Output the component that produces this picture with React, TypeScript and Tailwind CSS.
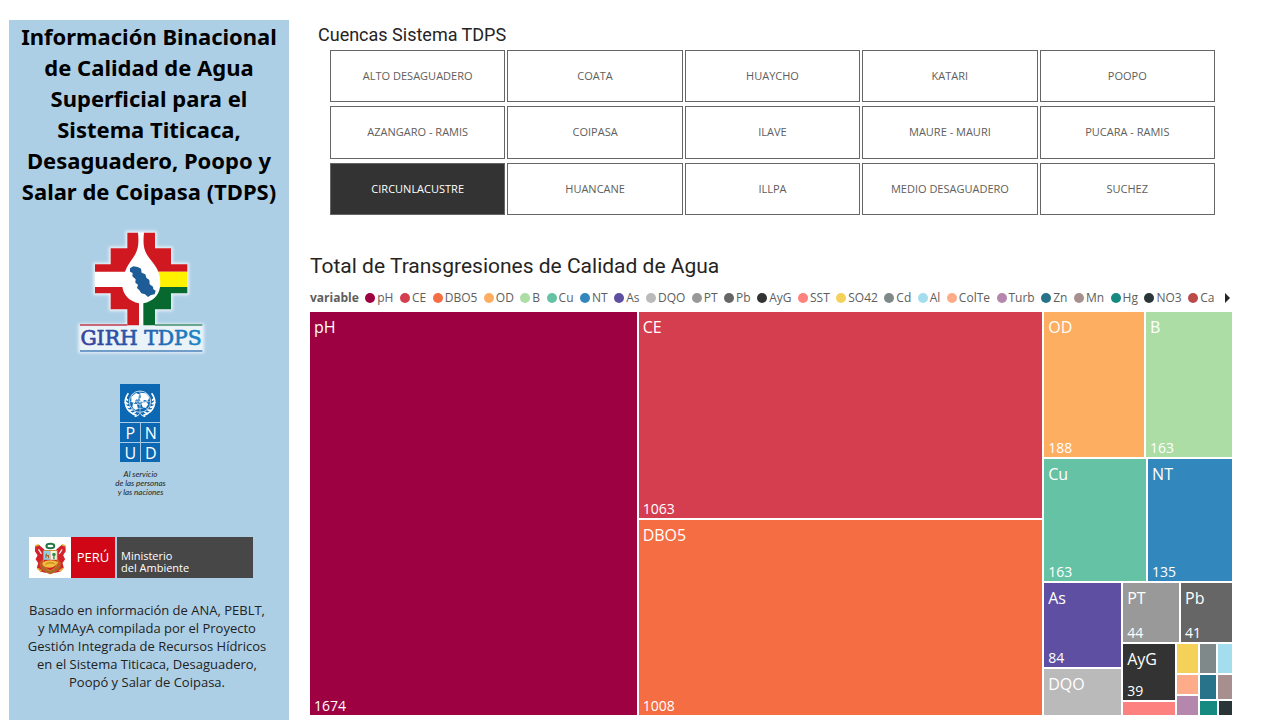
import { useState } from "react";

type Leaf = { name: string; color: string; weight: number; value?: number };
type Branch = { dir: "row" | "col"; weight: number; items: Tile[] };
type Tile = Leaf | Branch;

const basins = [
  "ALTO DESAGUADERO", "COATA", "HUAYCHO", "KATARI", "POOPO",
  "AZANGARO - RAMIS", "COIPASA", "ILAVE", "MAURE - MAURI", "PUCARA - RAMIS",
  "CIRCUNLACUSTRE", "HUANCANE", "ILLPA", "MEDIO DESAGUADERO", "SUCHEZ",
];

const legend: [string, string][] = [
  ["pH", "#9e0142"], ["CE", "#d53e4f"], ["DBO5", "#f46d43"], ["OD", "#fdae61"],
  ["B", "#abdda4"], ["Cu", "#66c2a5"], ["NT", "#3288bd"], ["As", "#5e4fa2"],
  ["DQO", "#bababa"], ["PT", "#999999"], ["Pb", "#666666"], ["AyG", "#333333"],
  ["SST", "#fd817e"], ["SO42", "#f4d25a"], ["Cd", "#7f8989"], ["Al", "#a4ddee"],
  ["ColTe", "#fdab89"], ["Turb", "#b687ac"], ["Zn", "#28738a"], ["Mn", "#a78f8f"],
  ["Hg", "#168980"], ["NO3", "#293537"], ["Ca", "#bb4a4a"],
];

const treemap: Branch = {
  dir: "row",
  weight: 1,
  items: [
    { name: "pH", color: "#9e0142", weight: 327, value: 1674 },
    {
      dir: "col",
      weight: 404,
      items: [
        { name: "CE", color: "#d53e4f", weight: 206, value: 1063 },
        { name: "DBO5", color: "#f46d43", weight: 195, value: 1008 },
      ],
    },
    {
      dir: "col",
      weight: 188,
      items: [
        {
          dir: "row",
          weight: 145,
          items: [
            { name: "OD", color: "#fdae61", weight: 100, value: 188 },
            { name: "B", color: "#abdda4", weight: 86, value: 163 },
          ],
        },
        {
          dir: "row",
          weight: 123,
          items: [
            { name: "Cu", color: "#66c2a5", weight: 102, value: 163 },
            { name: "NT", color: "#3288bd", weight: 84, value: 135 },
          ],
        },
        {
          dir: "row",
          weight: 132,
          items: [
            {
              dir: "col",
              weight: 77,
              items: [
                { name: "As", color: "#5e4fa2", weight: 83, value: 84 },
                { name: "DQO", color: "#bababa", weight: 46 },
              ],
            },
            {
              dir: "col",
              weight: 109,
              items: [
                {
                  dir: "row",
                  weight: 59,
                  items: [
                    { name: "PT", color: "#999999", weight: 56, value: 44 },
                    { name: "Pb", color: "#666666", weight: 51, value: 41 },
                  ],
                },
                {
                  dir: "row",
                  weight: 71,
                  items: [
                    {
                      dir: "col",
                      weight: 52,
                      items: [
                        { name: "AyG", color: "#333333", weight: 56, value: 39 },
                        { name: "", color: "#fd817e", weight: 13 },
                      ],
                    },
                    {
                      dir: "col",
                      weight: 21,
                      items: [
                        { name: "", color: "#f4d25a", weight: 29 },
                        { name: "", color: "#fdab89", weight: 19 },
                        { name: "", color: "#b687ac", weight: 19 },
                      ],
                    },
                    {
                      dir: "col",
                      weight: 32,
                      items: [
                        {
                          dir: "row",
                          weight: 29,
                          items: [
                            { name: "", color: "#7f8989", weight: 17 },
                            { name: "", color: "#a4ddee", weight: 14 },
                          ],
                        },
                        {
                          dir: "row",
                          weight: 24,
                          items: [
                            { name: "", color: "#28738a", weight: 17 },
                            { name: "", color: "#a78f8f", weight: 14 },
                          ],
                        },
                        {
                          dir: "row",
                          weight: 14,
                          items: [
                            { name: "", color: "#168980", weight: 18 },
                            { name: "", color: "#293537", weight: 13 },
                          ],
                        },
                      ],
                    },
                  ],
                },
              ],
            },
          ],
        },
      ],
    },
  ],
};

function TreeTile({ tile }: { tile: Tile }) {
  if ("items" in tile) {
    return (
      <div
        className={`flex min-h-0 min-w-0 basis-0 gap-0.5 ${tile.dir === "row" ? "flex-row" : "flex-col"}`}
        style={{ flexGrow: tile.weight }}
      >
        {tile.items.map((t, i) => (
          <TreeTile key={i} tile={t} />
        ))}
      </div>
    );
  }
  return (
    <div
      className="flex min-h-0 min-w-0 basis-0 flex-col justify-between overflow-hidden text-white"
      style={{ flexGrow: tile.weight, backgroundColor: tile.color }}
    >
      {tile.name && <span className="px-1 pt-[3px] text-base leading-6">{tile.name}</span>}
      {tile.value !== undefined && <span className="px-1 text-sm leading-[18px]">{tile.value}</span>}
    </div>
  );
}

function GirhLogo() {
  return (
    <svg viewBox="0 0 435 420" className="h-[140px] w-[145px]" role="img" aria-label="GIRH TDPS">
      <defs>
        <filter id="halo" x="-10%" y="-10%" width="120%" height="120%">
          <feGaussianBlur stdDeviation="5" />
        </filter>
        <linearGradient id="lettering" x1="0" x2="1">
          <stop offset="0" stopColor="#3c3f9c" />
          <stop offset="0.45" stopColor="#2858a8" />
          <stop offset="1" stopColor="#1c86c4" />
        </linearGradient>
      </defs>
      <path
        d="M172 38H255V85H303V133H352V220H303V268H255V316H397V394H30V316H172V268H122V220H75V133H122V85H172Z"
        fill="#fff" stroke="#fff" strokeWidth="10" opacity="0.75" filter="url(#halo)"
      />
      <path d="M172 38H255V85H303V133H352V220H303V268H255V316H172V268H122V220H75V133H122V85H172Z" fill="#fff" />
      <path d="M172 38H204C207 68 205 86 195 104C182 124 171 137 165 155H75V133H122V85H172Z" fill="#cf1820" />
      <path d="M255 38H222C219 68 220 86 231 104C245 124 258 137 265 155H352V133H303V85H255Z" fill="#cf1820" />
      <path d="M265 155H352V201H270C272 185 270 168 265 155Z" fill="#fff200" />
      <path d="M75 201H157C161 226 178 244 207 250V316H172V268H122V220H75Z" fill="#cf1820" />
      <path d="M352 201H270C267 225 249 244 220 250V316H255V268H303V220H352Z" fill="#07692f" />
      <path
        d="M180 145L190 139L203 141L213 146L215 158L226 163L229 173L238 180L239 193L249 200L250 208L257 212L254 223L243 225L234 231L225 223L214 220L208 211L201 204L204 194L196 188L197 178L187 169L188 159L180 155Z"
        fill="#1d5c96"
      />
      <path d="M30 315H172" stroke="#c33a4c" strokeWidth="4" />
      <path d="M255 315H397" stroke="#438f6a" strokeWidth="4" />
      <text x="213" y="376" textAnchor="middle" fill="url(#lettering)" stroke="url(#lettering)" strokeWidth="2" fontSize="61" className="font-['DejaVu_Serif',serif]">
        GIRH TDPS
      </text>
      <path d="M30 393H397" stroke="#4b7fb8" strokeWidth="5" />
    </svg>
  );
}

function UnEmblem() {
  return (
    <svg viewBox="0 0 120 114" className="h-[38px] w-10" aria-hidden="true">
      <g fill="none" stroke="#fff" strokeWidth="2.2">
        <circle cx="60" cy="53" r="32" />
        <circle cx="60" cy="53" r="21" opacity="0.7" />
        <circle cx="60" cy="53" r="10" opacity="0.7" />
        <path d="M60 21V85M28 53H92M37 30L83 76M83 30L37 76" opacity="0.7" />
        <path d="M25 28C7 53 17 84 50 94M95 28C113 53 103 84 70 94" strokeWidth="5" />
        <path d="M44 98C52 98 57 91 60 88C63 91 68 98 76 98" strokeWidth="3" />
        <path d="M16 42l8 8M14 54l11 6M18 67l12 3M26 79l12-1M37 89l10-5M104 42l-8 8M106 54l-11 6M102 67l-12 3M94 79l-12-1M83 89l-10-5" strokeWidth="5" />
      </g>
      <path
        d="M34 38l14-11 9 4-1 12-9 5-2 9-11-3zM61 26l16 2 11 12-4 10-12-2-6 7-7-8 4-8zM65 56l13-2 7 7-8 11-10-4zM39 58l12 3 3 14-8 3-9-9z"
        fill="#fff"
      />
    </svg>
  );
}

function PnudLogo() {
  const cell = "flex h-[19px] items-center justify-center bg-[#0c68b3]";
  return (
    <figure className="flex flex-col items-center">
      <div className="grid w-10 grid-cols-2 gap-px bg-[#a9cbe6] text-base leading-none text-white">
        <div className="col-span-2 bg-[#0c68b3]">
          <UnEmblem />
        </div>
        <span className={cell}>P</span>
        <span className={cell}>N</span>
        <span className={cell}>U</span>
        <span className={cell}>D</span>
      </div>
      <figcaption className="pt-2 text-center font-['Lato','Noto_Sans',sans-serif] text-[8px] leading-[9px] text-[#222] italic">
        Al servicio
        <br />
        de las personas
        <br />
        y las naciones
      </figcaption>
    </figure>
  );
}

function PeruCrest() {
  return (
    <svg viewBox="0 0 128 122" className="h-full w-[42px] bg-white" aria-hidden="true">
      <path d="M19 26L30 22L46 36L60 62L52 108L34 104L24 92L28 78L20 66L26 54L18 42Z" fill="#d4222c" />
      <path d="M111 26L100 22L84 36L70 62L78 108L96 104L106 92L102 78L110 66L104 54L112 42Z" fill="#d4222c" />
      <path d="M29 36L38 50M101 36L92 50" stroke="#f7e9df" strokeWidth="4" fill="none" />
      <path d="M19 26l11-4M100 22l11 4M26 94l12 8M92 102l12-8" stroke="#e0b13a" strokeWidth="5" />
      <path d="M32 76C30 96 46 105 65 112C84 105 100 96 98 76L88 66H42Z" fill="#c9571f" />
      <path d="M36 84C42 98 52 102 65 106C78 102 88 98 94 84" fill="none" stroke="#6f8a35" strokeWidth="3" />
      <ellipse cx="65" cy="26" rx="12" ry="7" fill="none" stroke="#237747" strokeWidth="6" />
      <path d="M44 40H86V72C86 90 76 97 65 101C54 97 44 90 44 72Z" fill="#cf2228" stroke="#c98d2c" strokeWidth="3" />
      <path d="M45 41H65V68H45Z" fill="#8fd0e8" />
      <path d="M65 41H85V68H65Z" fill="#f1f5dd" />
      <path d="M50 63V53l3-6 2 6h6v10h-3v-6h-5v6z" fill="#a5672b" />
      <path d="M74 66V56c-6-2-3-10 2-9 6 0 8 7 2 9v10z" fill="#2c8a4b" />
      <path d="M40 80c8-13 38-14 50-3-6 1-8 10-18 14-12 4-28-1-32-11z" fill="#f0bd3c" />
      <path d="M50 82c8-6 20-6 28-2" fill="none" stroke="#b5791d" strokeWidth="3" />
    </svg>
  );
}

function PeruLogo() {
  return (
    <div className="flex h-[41px] w-56 gap-0.5 text-left text-white">
      <div className="flex">
        <PeruCrest />
        <span className="flex w-11 items-center justify-center bg-[#d00515] text-[13px]">PERÚ</span>
      </div>
      <div className="flex flex-1 flex-col justify-center bg-[#474747] px-1 pt-2 text-[11px] leading-3">
        <span>Ministerio</span>
        <span>del Ambiente</span>
      </div>
    </div>
  );
}

export default function App() {
  const [selected, setSelected] = useState("CIRCUNLACUSTRE");

  return (
    <div className="flex min-h-screen bg-white pt-5 pr-[30px] pl-[9px] font-['Open_Sans','Noto_Sans',sans-serif]">
      <aside className="flex w-[280px] shrink-0 flex-col items-center bg-[#adcfe6] text-center text-black">
        <h1 className="pt-px font-['Noto_Sans',sans-serif] text-[22px] leading-[31px] font-bold">
          Información Binacional
          <br />
          de Calidad de Agua
          <br />
          Superficial para el
          <br />
          Sistema Titicaca,
          <br />
          Desaguadero, Poopo y
          <br />
          Salar de Coipasa (TDPS)
        </h1>
        <div className="pt-[13px] pr-[14px]">
          <GirhLogo />
        </div>
        <div className="pt-6 pr-[17px]">
          <PnudLogo />
        </div>
        <div className="pt-10 pr-4">
          <PeruLogo />
        </div>
        <p className="pt-[23px] pr-1 text-[13px] leading-[18px] text-[#222]">
          Basado en información de ANA, PEBLT,
          <br />
          y MMAyA compilada por el Proyecto
          <br />
          Gestión Integrada de Recursos Hídricos
          <br />
          en el Sistema Titicaca, Desaguadero,
          <br />
          Poopó y Salar de Coipasa.
        </p>
      </aside>

      <main className="flex min-w-0 flex-1 flex-col pb-[5px] pl-[21px]">
        <section className="pr-[17px] pl-2">
          <h2 className="font-['Roboto',sans-serif] text-lg leading-[30px] text-[#252423]">Cuencas Sistema TDPS</h2>
          <div className="grid h-[165px] grid-cols-5 grid-rows-3 gap-x-0.5 gap-y-1 pl-3">
            {basins.map((name) => (
              <button
                key={name}
                type="button"
                aria-pressed={selected === name}
                onClick={() => setSelected(name)}
                className={`border border-[#666] text-[11px] ${
                  selected === name ? "bg-[#333] text-white" : "bg-white text-[#605e5c]"
                }`}
              >
                {name}
              </button>
            ))}
          </div>
        </section>

        <section className="flex flex-1 flex-col pt-9">
          <h2 className="font-['Roboto',sans-serif] text-[21px] leading-[30px] text-[#252423]">
            Total de Transgresiones de Calidad de Agua
          </h2>
          <div className="flex h-[31px] items-center justify-between pt-0.5 pr-0.5 text-xs text-[#605e5c]">
            <span className="font-bold">variable</span>
            {legend.map(([name, color]) => (
              <span key={name} className="flex items-center gap-0.5">
                <span className="size-2.5 rounded-full" style={{ backgroundColor: color }} />
                {name}
              </span>
            ))}
            <button type="button" aria-label="Siguiente" className="pl-1">
              <svg viewBox="0 0 5 10" className="h-2.5 w-[5px]">
                <path d="M0 0L5 5L0 10Z" fill="#252423" />
              </svg>
            </button>
          </div>
          <div className="flex flex-1">
            <TreeTile tile={treemap} />
          </div>
        </section>
      </main>
    </div>
  );
}
